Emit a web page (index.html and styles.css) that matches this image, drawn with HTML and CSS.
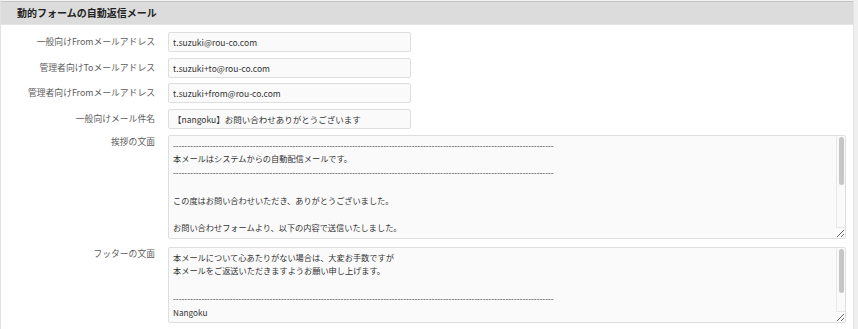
FILE: index.html
```html
<!DOCTYPE html>
<html lang="ja">

<head>
    <meta charset="UTF-8">
    <meta name="viewport" content="width=device-width, initial-scale=1.0">
    <title>動的フォームの自動返信メール</title>
    <link rel="stylesheet" href="styles.css">
</head>

<body>
    <div class="panel">
        <h2 class="panel-title">動的フォームの自動返信メール</h2>
        <div class="form">
            <div class="row">
                <label class="row-label" for="fromUser">一般向けFromメールアドレス</label>
                <input class="text" type="text" id="fromUser" value="t.suzuki@rou-co.com">
            </div>
            <div class="row">
                <label class="row-label" for="toAdmin">管理者向けToメールアドレス</label>
                <input class="text" type="text" id="toAdmin" value="t.suzuki+to@rou-co.com">
            </div>
            <div class="row">
                <label class="row-label" for="fromAdmin">管理者向けFromメールアドレス</label>
                <input class="text" type="text" id="fromAdmin" value="t.suzuki+from@rou-co.com">
            </div>
            <div class="row">
                <label class="row-label" for="subject">一般向けメール件名</label>
                <input class="text" type="text" id="subject" value="【nangoku】お問い合わせありがとうございます">
            </div>
            <div class="row row-top">
                <label class="row-label" for="greeting">挨拶の文面</label>
                <div class="area-wrap">
                    <textarea class="area area-lg" id="greeting">--------------------------------------------------------------------------------------------------------------------------------------
本メールはシステムからの自動配信メールです。
--------------------------------------------------------------------------------------------------------------------------------------

この度はお問い合わせいただき、ありがとうございました。

お問い合わせフォームより、以下の内容で送信いたしました。

内容を確認の上、担当者よりご連絡させていただきます。
今しばらくお待ちくださいますようお願い申し上げます。

--------------------------------------------------------------------------------------------------------------------------------------
</textarea>
                    <div class="scrollbar"><div class="thumb thumb-lg"></div></div>
                </div>
            </div>
            <div class="row row-top">
                <label class="row-label" for="footer">フッターの文面</label>
                <div class="area-wrap">
                    <textarea class="area area-sm" id="footer">本メールについて心あたりがない場合は、大変お手数ですが
本メールをご返送いただきますようお願い申し上げます。

--------------------------------------------------------------------------------------------------------------------------------------
Nangoku
https://rou-co.com/
--------------------------------------------------------------------------------------------------------------------------------------</textarea>
                    <div class="scrollbar"><div class="thumb thumb-sm"></div></div>
                </div>
            </div>
        </div>
    </div>
</body>

</html>
```

FILE: styles.css
```css
body {
    margin: 0;
    padding: 0;
    background-color: #efefef;
    font-family: "Noto Sans CJK JP", sans-serif;
    color: #333;
}

.panel {
    width: 854px;
    height: 329px;
    box-sizing: border-box;
    background-color: white;
    border-left: 1px solid #e2e2e2;
    border-right: 1px solid #e2e2e2;
    border-top: 1px solid #f2f2f2;
    overflow: hidden;
}

.panel-title {
    margin: 0;
    height: 24px;
    box-sizing: border-box;
    padding-left: 16px;
    background-color: #dcdcdc;
    border-top: 1px solid #c4c4c4;
    border-bottom: 1px solid #e6e6e6;
    font-size: 10px;
    font-weight: bold;
    line-height: 22px;
    color: #222;
}

.form {
    padding-top: 7px;
}

.row {
    display: flex;
    align-items: center;
    margin-bottom: 5.67px;
}

.row-top {
    align-items: flex-start;
    margin-bottom: 8px;
}

.row-label {
    width: 154px;
    margin-right: 13px;
    flex-shrink: 0;
    text-align: right;
    font-size: 8.8px;
    line-height: 20px;
    color: #5c5c5c;
}

.row-top .row-label {
    line-height: 13px;
    padding-top: 0;
}

.text {
    width: 243px;
    height: 20px;
    box-sizing: border-box;
    margin: 0;
    padding: 0 4px;
    border: 1px solid #dedede;
    border-radius: 2px;
    background-color: #fafafa;
    font-family: "Noto Sans CJK JP", sans-serif;
    font-size: 8.5px;
    color: #333;
}

.area-wrap {
    position: relative;
    display: flex;
}

.area {
    width: 678px;
    box-sizing: border-box;
    margin: 0;
    padding: 3px 4px;
    border: 1px solid #dedede;
    border-radius: 2px;
    background-color: #fafafa;
    font-family: "Noto Sans CJK JP", sans-serif;
    font-size: 8.2px;
    line-height: 13.8px;
    color: #333;
    overflow: hidden;
    white-space: pre;
}

.area-lg {
    height: 104px;
}

.area-sm {
    height: 76px;
}

/* drawn scrollbar, the page is shot without native ones */
.scrollbar {
    position: absolute;
    top: 1px;
    right: 1px;
    bottom: 11px;
    width: 8px;
    background-color: #fafafa;
    border-left: 1px solid #e8e8e8;
    border-bottom: 1px solid #e8e8e8;
}

.thumb {
    margin: 1px 1px 0 2px;
    border-radius: 3px;
    background-color: #c6c6c6;
}

.thumb-lg {
    height: 48px;
}

.thumb-sm {
    height: 44px;
}
```
